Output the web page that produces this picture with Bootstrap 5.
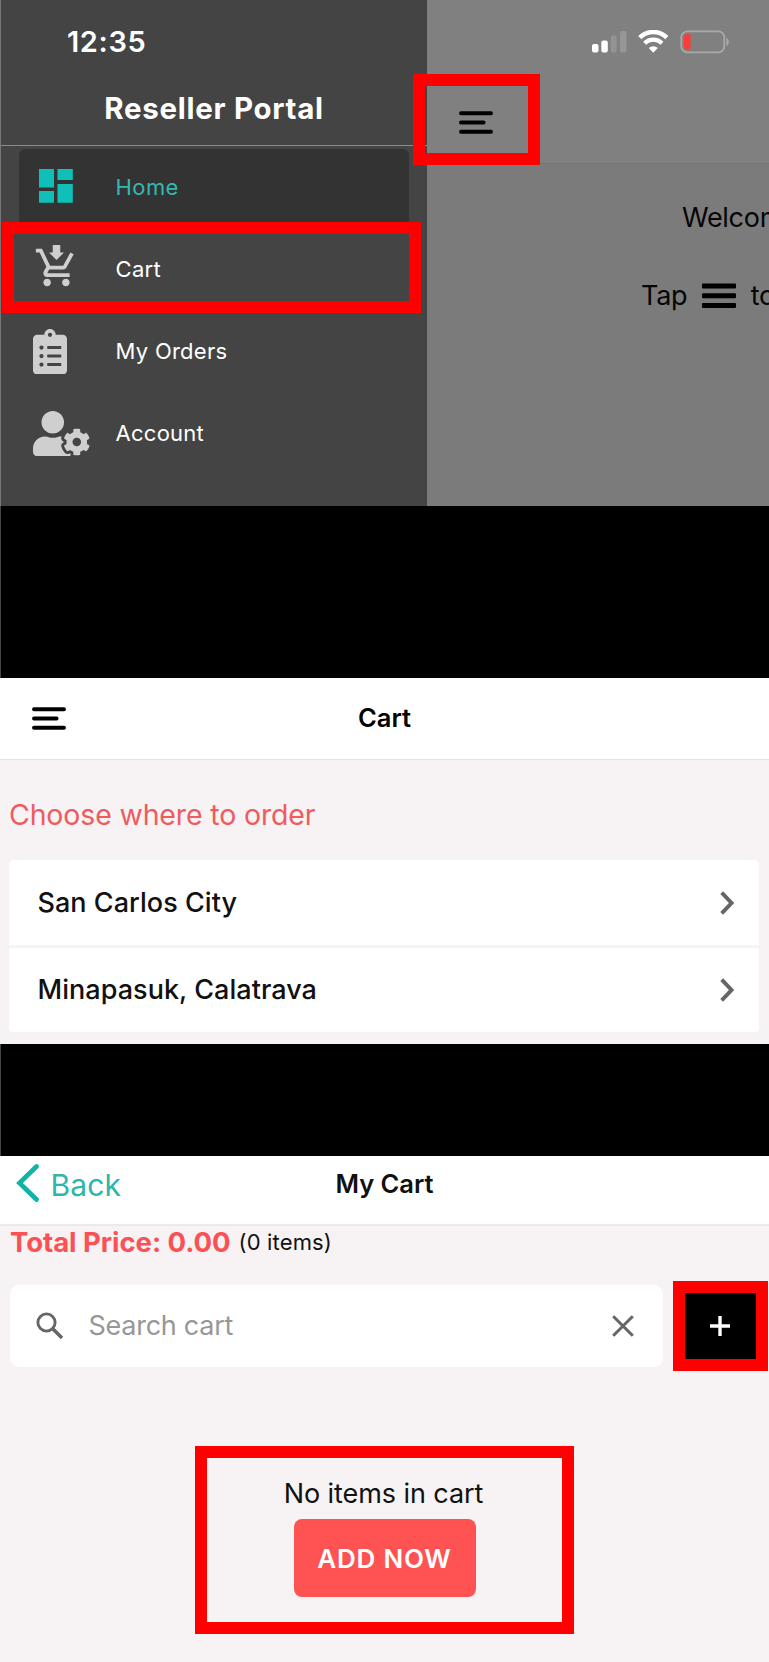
<!DOCTYPE html>
<html lang="en">
<head>
<meta charset="utf-8">
<meta name="viewport" content="width=device-width, initial-scale=1">
<title>Reseller Portal</title>
<link href="https://cdn.jsdelivr.net/npm/bootstrap@5.3.0/dist/css/bootstrap.min.css" rel="stylesheet">
<style>
  body { font-family: Inter, "Liberation Sans", sans-serif; background: #000; color: #111; font-size: 27px; line-height: 1.2; overflow-x: hidden; }
  svg { display: block; flex: none; }
  .screen { width: 769px; position: relative; overflow: hidden; }

  /* drawer screen */
  .screen-menu { height: 506px; border-left: 1px solid #777; }
  .drawer { width: 426px; background: #444; color: #fff; flex: none; }
  .drawer-status { height: 71px; padding: 25px 0 0 66px; font-size: 29px; font-weight: 600; letter-spacing: .6px; }
  .drawer-title { height: 75px; padding-bottom: 1px; border-bottom: 1px solid #8b8b8b; font-size: 29.5px; font-weight: 700; letter-spacing: .72px; line-height: 74px; }
  .drawer-nav { padding: 3px 18px 0; gap: 5px; }
  .drawer-nav .nav-link { height: 77px; padding: 0; color: #fff; font-size: 22px; letter-spacing: .25px; border-radius: 6px; }
  .drawer-nav .nav-link.active { background: #333; color: #34b9b0; letter-spacing: .4px; }
  .nav-glyph { width: 96.6px; flex: none; color: #cfcfcf; }
  .active .nav-glyph { color: #0fc0b8; }
  .behind { background: #7b7b7b; color: #060606; letter-spacing: -.3px; min-width: 0; }
  .behind-top { height: 164px; background: #808080; border-bottom: 1px solid #757575; }
  .behind-status { height: 83px; padding-left: 165px; }
  .behind-menu { padding-left: 32px; padding-top: 28px; }
  .welcome { margin-top: 38px; padding-left: 255px; }
  .hint { margin-top: 46px; padding-left: 214px; }

  /* location picker */
  .gap-a { height: 172px; border-left: 1px solid #444; }
  .screen-pick { height: 366px; background: #f7f3f4; }
  .bar-pick { height: 82px; background: #fff; border-bottom: 1px solid #eadfe1; }
  .bar-title { font-size: 25.5px; font-weight: 600; }
  .choose { font-size: 28.5px; letter-spacing: -.15px; color: #ef5c5f; height: 100px; padding: 11px 0 0 9px; }
  .places { margin: 0 10px 0 9px; border-radius: 4px; overflow: hidden; }
  .places .list-group-item { height: 84.5px; padding: 1px 25px 0 28.5px; border: 0; font-weight: 500; letter-spacing: .04px; color: #111; background: #fff; }
  .places .list-group-item + .list-group-item { border-top: 3px solid #f6f4f5; height: 87px; }

  /* cart */
  .gap-b { height: 112px; border-left: 1px solid #444; }
  .screen-cart { height: 506px; background: #f7f3f4; }
  .bar-cart { height: 70px; background: #fff; border-bottom: 2px solid #f1e6e8; padding-bottom: 11px; }
  .back-link { color: #2fb5aa; font-size: 30px; letter-spacing: .13px; text-decoration: none; }
  .total { height: 33px; padding-left: 10px; }
  .total strong { color: #fb5154; font-size: 27.5px; font-weight: 700; letter-spacing: -.05px; }
  .total span { font-size: 22px; letter-spacing: .15px; }
  .search-row { margin-top: 21.5px; }
  .search-box { width: 653px; height: 82px; margin-left: 9.5px; padding: 0 29px 0 26.5px; background: #fff; border-radius: 9px; }
  .search-box .form-control { border: 0; padding: 2px 0 0 24.5px; font-size: 27px; letter-spacing: -.26px; box-shadow: none; background: transparent; }
  .search-box .form-control::placeholder { color: #979797; opacity: 1; }
  .plus-btn { width: 94.5px; height: 90px; margin-left: 10.5px; background: #000; border: 12px solid #f00; border-radius: 0; }
  .empty { width: 379px; height: 188px; margin: 75px 0 0 195px; border: 12px solid #f00; padding: 20.5px 0 0 0; }
  .empty p { letter-spacing: -.07px; line-height: 32px; margin: 0 2px 9px 0; }
  .add-btn { width: 182px; height: 78px; background: #ff5252; color: #fff; font-size: 26px; font-weight: 600; letter-spacing: .78px; border: 0; border-radius: 8px; }

  /* red callouts laid over the drawer screen */
  .callout { position: absolute; border: 12px solid #f00; }
  .callout-menu { left: 412px; top: 74px; width: 126.5px; height: 91px; }
  .callout-cart { left: 1px; top: 221.5px; width: 418.5px; height: 91.5px; }
</style>
</head>
<body>
<svg width="0" height="0" class="position-absolute" aria-hidden="true">
  <symbol id="menu" viewBox="0 0 34 23"><path d="M2 2.2h30M2 11.5h22.6M2 20.8h30" stroke="#000" stroke-width="3.9" stroke-linecap="round"/></symbol>
  <symbol id="chev" viewBox="0 0 14 24"><path d="M1.7 1.7 11.5 12 1.7 22.3" fill="none" stroke="#666" stroke-width="3.9"/></symbol>
</svg>

<section class="screen screen-menu d-flex">
  <aside class="drawer">
    <div class="drawer-status">12:35</div>
    <div class="drawer-title text-center">Reseller Portal</div>
    <nav class="drawer-nav nav flex-column">
      <a class="nav-link active d-flex align-items-center" href="#">
        <span class="nav-glyph ps-3 pb-1"><svg class="ms-1" width="34" height="34" viewBox="0 0 34 34" fill="currentColor"><path d="M0 0h15v18.500H0zM18.500 0h15.300v11H18.500zM0 22h15v11.800H0zM18.500 15h15.300v18.800H18.500z"/></svg></span>Home
      </a>
      <a class="nav-link d-flex align-items-center" href="#">
        <span class="nav-glyph pb-1"><svg style="margin-left:14.500px" width="45" height="45" viewBox="0 0 24 24" fill="currentColor"><path d="M10 0V4H8L12 8L16 4H14V0M1 2V4H3L6.600 11.590L5.250 14.040C5.090 14.320 5 14.650 5 15C5 16.110 5.900 17 7 17H19V15H7.420C7.290 15 7.170 14.890 7.170 14.750L7.200 14.630L8.100 13H15.550C16.300 13 16.960 12.590 17.300 11.970L21.160 4.960L19.420 4H19.410L18.310 6L15.550 11H8.530L8.400 10.730L6.160 6L5.210 4L4.270 2M7 18C5.900 18 5 18.900 5 20S5.900 22 7 22 9 21.100 9 20 8.110 18 7 18M17 18C15.900 18 15 18.900 15 20S15.900 22 17 22 19 21.100 19 20 18.110 18 17 18Z"/></svg></span>Cart
      </a>
      <a class="nav-link d-flex align-items-center" href="#">
        <span class="nav-glyph"><svg style="margin-left:14.300px" width="34" height="45.500" viewBox="0 0 384 512" fill="currentColor"><path d="M336 64h-80c0-35.300-28.700-64-64-64s-64 28.700-64 64H48C21.500 64 0 85.500 0 112v352c0 26.500 21.500 48 48 48h288c26.500 0 48-21.500 48-48V112c0-26.500-21.500-48-48-48zM96 424c-13.300 0-24-10.700-24-24s10.700-24 24-24 24 10.700 24 24-10.700 24-24 24zm0-96c-13.300 0-24-10.700-24-24s10.700-24 24-24 24 10.700 24 24-10.700 24-24 24zm0-96c-13.300 0-24-10.700-24-24s10.700-24 24-24 24 10.700 24 24-10.700 24-24 24zm96-192c13.300 0 24 10.700 24 24s-10.700 24-24 24-24-10.700-24-24 10.700-24 24-24zm128 368c0 4.400-3.600 8-8 8H168c-4.400 0-8-3.600-8-8v-16c0-4.400 3.600-8 8-8h144c4.400 0 8 3.600 8 8v16zm0-96c0 4.400-3.600 8-8 8H168c-4.400 0-8-3.600-8-8v-16c0-4.400 3.600-8 8-8h144c4.400 0 8 3.600 8 8v16zm0-96c0 4.400-3.600 8-8 8H168c-4.400 0-8-3.600-8-8v-16c0-4.400 3.600-8 8-8h144c4.400 0 8 3.600 8 8v16z"/></svg></span>My Orders
      </a>
      <a class="nav-link d-flex align-items-center" href="#">
        <span class="nav-glyph"><svg style="margin-left:14.300px" width="56.500" height="45.200" viewBox="0 0 640 512" fill="currentColor"><path d="M610.500 373.300c2.600-14.100 2.600-28.500 0-42.600l25.800-14.900c3-1.700 4.300-5.200 3.300-8.500-6.700-21.600-18.200-41.200-33.200-57.400-2.300-2.500-6-3.100-9-1.400l-25.800 14.900c-10.900-9.300-23.400-16.500-36.900-21.300v-29.800c0-3.400-2.400-6.400-5.700-7.100-22.300-5-45-4.800-66.200 0-3.300.7-5.700 3.700-5.700 7.100v29.800c-13.500 4.800-26 12-36.900 21.300l-25.800-14.900c-2.900-1.700-6.700-1.100-9 1.400-15 16.200-26.500 35.800-33.200 57.400-1 3.300.4 6.800 3.300 8.500l25.800 14.900c-2.600 14.100-2.600 28.500 0 42.600l-25.800 14.900c-3 1.700-4.300 5.200-3.300 8.500 6.700 21.600 18.200 41.100 33.200 57.400 2.300 2.500 6 3.100 9 1.400l25.800-14.900c10.900 9.300 23.400 16.500 36.900 21.300v29.800c0 3.400 2.400 6.400 5.700 7.100 22.300 5 45 4.800 66.200 0 3.300-.7 5.700-3.700 5.700-7.100v-29.800c13.500-4.800 26-12 36.900-21.300l25.800 14.900c2.900 1.700 6.700 1.100 9-1.400 15-16.200 26.500-35.800 33.200-57.400 1-3.300-.4-6.800-3.300-8.500l-25.800-14.900zM496 400.500c-26.800 0-48.500-21.800-48.500-48.500s21.800-48.500 48.500-48.500 48.500 21.800 48.500 48.500-21.700 48.500-48.500 48.500zM224 256c70.700 0 128-57.300 128-128S294.700 0 224 0 96 57.300 96 128s57.300 128 128 128zm201.200 226.500c-2.300-1.200-4.600-2.600-6.800-3.900l-7.900 4.600c-6 3.400-12.800 5.300-19.600 5.300-10.900 0-21.400-4.600-28.900-12.600-18.300-19.800-32.300-43.900-40.200-69.600-5.500-17.700 1.900-36.400 17.900-45.700l7.900-4.600c-.1-2.600-.1-5.200 0-7.800l-7.900-4.600c-16-9.200-23.400-28-17.900-45.700.9-2.900 2.200-5.800 3.200-8.700-3.800-.3-7.500-1.200-11.400-1.200h-16.700c-22.200 10.200-46.900 16-72.900 16s-50.600-5.800-72.900-16h-16.700C60.200 288 0 348.200 0 422.400V464c0 26.500 21.500 48 48 48h352c10.100 0 19.500-3.200 27.200-8.500-1.200-3.800-2-7.700-2-11.800v-9.200z"/></svg></span>Account
      </a>
    </nav>
  </aside>
  <main class="behind flex-grow-1 overflow-hidden text-nowrap">
    <div class="behind-top">
      <div class="behind-status d-flex align-items-center">
        <svg width="138" height="24" viewBox="0 0 138 24" fill="none">
          <rect x="0" y="14" width="6.500" height="8.500" rx="2" fill="#fff"/>
          <rect x="9.300" y="10.500" width="6.500" height="12" rx="2" fill="#fff"/>
          <rect x="18.700" y="5.500" width="6" height="17" rx="2" fill="#939393"/>
          <rect x="28" y="1" width="6.500" height="21.500" rx="2" fill="#969696"/>
          <path d="M47.800 7.600a19 19 0 0 1 27 0" stroke="#fff" stroke-width="4.400"/>
          <path d="M52.600 13.200a12.200 12.200 0 0 1 17.400 0" stroke="#fff" stroke-width="4.200"/>
          <path d="M61.300 22.800l-4.500-4.700a6.400 6.400 0 0 1 9 0z" fill="#fff"/>
          <rect x="89.300" y="1.300" width="43" height="21" rx="6" stroke="#a9a9a9" stroke-width="1.800"/>
          <path d="M98.500 4v15.500h-2.500a4 4 0 0 1-4-4V8a4 4 0 0 1 4-4z" fill="#ff3b36"/>
          <path d="M134.500 8c3 1 3 7 0 8z" fill="#a9a9a9"/>
        </svg>
      </div>
      <div class="behind-menu"><svg width="34" height="23"><use href="#menu"/></svg></div>
    </div>
    <div class="welcome">Welcome to</div>
    <div class="hint d-flex align-items-center">Tap
      <svg style="margin:0 15px 1px 14.500px" width="34" height="26" viewBox="0 0 34 26"><path d="M1 .5h32q1 0 1 1v3q0 1-1 1H1q-1 0-1-1v-3q0-1 1-1zM1 10.300h32q1 0 1 1v3q0 1-1 1H1q-1 0-1-1v-3q0-1 1-1zM1 20h32q1 0 1 1v3q0 1-1 1H1q-1 0-1-1v-3q0-1 1-1z" fill="#000"/></svg>to open</div>
  </main>
  <div class="callout callout-menu"></div>
  <div class="callout callout-cart"></div>
</section>

<div class="gap-a"></div>

<section class="screen screen-pick">
  <header class="bar-pick row g-0 align-items-center">
    <div class="col"><svg style="margin-left:31.500px" width="34" height="23"><use href="#menu"/></svg></div>
    <div class="col-auto bar-title text-black">Cart</div>
    <div class="col"></div>
  </header>
  <div class="choose d-flex align-items-center">Choose where to order</div>
  <div class="list-group list-group-flush places">
    <a href="#" class="list-group-item d-flex align-items-center justify-content-between">San Carlos City <svg width="14" height="24"><use href="#chev"/></svg></a>
    <a href="#" class="list-group-item d-flex align-items-center justify-content-between">Minapasuk, Calatrava <svg width="14" height="24"><use href="#chev"/></svg></a>
  </div>
</section>

<div class="gap-b"></div>

<section class="screen screen-cart">
  <header class="bar-cart row g-0 align-items-center">
    <div class="col"><a href="#" class="back-link d-flex align-items-center"><svg style="margin:0 12px 3px 15.500px" width="23" height="38" viewBox="0 0 23 38"><path d="M20.500 2.500 3.500 19 20.500 35.500" fill="none" stroke="#12b3a7" stroke-width="4.700" stroke-linecap="round"/></svg>Back</a></div>
    <div class="col-auto bar-title">My Cart</div>
    <div class="col"></div>
  </header>
  <div class="total d-flex align-items-center"><strong>Total Price: 0.00</strong><span class="ms-2">(0 items)</span></div>
  <div class="search-row d-flex align-items-center">
    <div class="search-box d-flex align-items-center">
      <svg width="28" height="28" viewBox="0 0 28 28" fill="none" stroke="#666"><circle cx="10.500" cy="10.500" r="8.600" stroke-width="2.900"/><path d="M17 17l9 9" stroke-width="3.600"/></svg>
      <input class="form-control" type="text" placeholder="Search cart" aria-label="Search cart">
      <svg width="22" height="22" viewBox="0 0 22 22" stroke="#666" stroke-width="3"><path d="M1.200 1.200l19.600 19.600M20.800 1.200 1.200 20.800"/></svg>
    </div>
    <button class="btn plus-btn p-0 d-flex align-items-center justify-content-center" type="button" aria-label="Add">
      <svg width="20" height="20" viewBox="0 0 20 20" stroke="#fff" stroke-width="3.400"><path d="M10 0v20M0 10h20"/></svg>
    </button>
  </div>
  <div class="empty text-center">
    <p>No items in cart</p>
    <button class="btn add-btn p-0" type="button">ADD NOW</button>
  </div>
</section>
<script src="https://cdn.jsdelivr.net/npm/bootstrap@5.3.0/dist/js/bootstrap.bundle.min.js"></script>
</body>
</html>
